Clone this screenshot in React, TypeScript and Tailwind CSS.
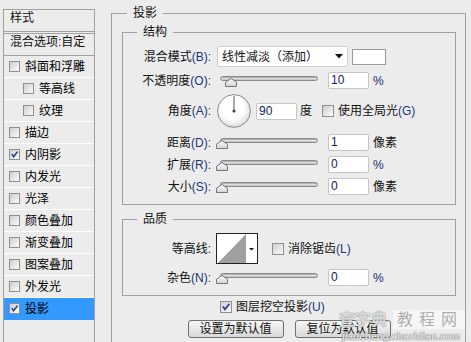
import React from 'react';

function Check({ checked = false, big = false }: { checked?: boolean; big?: boolean }) {
  return (
    <span
      className={`relative inline-block shrink-0 border border-[#8e8f8f] bg-linear-to-br from-[#cfcfcf] to-[#fbfbfb] ${
        big ? 'w-[12px] h-[12px]' : 'w-[11px] h-[11px]'
      }`}
    >
      {checked && (
        <svg className="absolute left-0 top-0" width="100%" height="100%" viewBox="0 0 10 10">
          <path d="M2 4.6 L4 7.4 L8.4 1.8" fill="none" stroke="#213a8f" strokeWidth="1.7" />
        </svg>
      )}
    </span>
  );
}

const L = ({ children }: { children: React.ReactNode }) => (
  <span className="text-[#1c3478]">{children}</span>
);

function Label({ children }: { children: React.ReactNode }) {
  return <div className="w-[88px] shrink-0 text-right leading-[16px]">{children}</div>;
}

function Slider({ pct }: { pct: number }) {
  return (
    <div className="relative w-[102px] h-[17px] shrink-0">
      <div className="absolute left-[4px] top-[4px] w-[98px] h-[5px] rounded-full border border-[#8a8a8a] bg-linear-to-b from-[#9c9c9c] via-[#dedede] to-[#bdbdbd]" />
      <svg className="absolute top-[6px]" style={{ left: pct * 92 }} width="12" height="9" viewBox="0 0 12 9">
        <defs>
          <linearGradient id="thumbg" x1="0" y1="0" x2="0" y2="1">
            <stop offset="0" stopColor="#ffffff" />
            <stop offset="1" stopColor="#d2d2d2" />
          </linearGradient>
        </defs>
        <polygon points="6,0.5 11.5,4.2 11.5,8.5 0.5,8.5 0.5,4.2" fill="url(#thumbg)" stroke="#777" strokeWidth="1" />
      </svg>
    </div>
  );
}

function Input({ value, w = 'w-[41px]' }: { value: string; w?: string }) {
  return (
    <div
      className={`${w} h-[17px] shrink-0 border border-[#c6c6c6] rounded-[2px] bg-white pl-[2px] text-[12px] leading-[15px] text-[#141a5c]`}
    >
      {value}
    </div>
  );
}

function SliderRow({
  label,
  pct,
  value,
  unit,
  mt,
}: {
  label: React.ReactNode;
  pct: number;
  value: string;
  unit: string;
  mt: string;
}) {
  return (
    <div className={`flex items-center h-[17px] ${mt}`}>
      <Label>{label}</Label>
      <div className="ml-[5px] flex items-center">
        <Slider pct={pct} />
        <div className="ml-[10px]">
          <Input value={value} />
        </div>
        <span className={`ml-[4px] leading-[16px] ${unit === '%' ? 'text-[#1c2a6a]' : ''}`}>{unit}</span>
      </div>
    </div>
  );
}

const rows: { t: string; sub?: boolean; checked?: boolean; active?: boolean }[] = [
  { t: '斜面和浮雕' },
  { t: '等高线', sub: true },
  { t: '纹理', sub: true },
  { t: '描边' },
  { t: '内阴影', checked: true },
  { t: '内发光' },
  { t: '光泽' },
  { t: '颜色叠加' },
  { t: '渐变叠加' },
  { t: '图案叠加' },
  { t: '外发光' },
  { t: '投影', checked: true, active: true },
];

function Button({ children }: { children: React.ReactNode }) {
  return (
    <div className="w-[96px] h-[18px] border border-[#707070] rounded-[3px] bg-linear-to-b from-[#f6f6f6] to-[#d9d9d9] flex items-center justify-center leading-[16px] text-[#111]">
      {children}
    </div>
  );
}

export default function App() {
  return (
    <div className="relative w-[471px] h-[342px] overflow-hidden bg-[#ececec] text-[12px] text-[#111] font-['Liberation_Sans','Noto_Sans_CJK_SC',sans-serif]">
      <div className="flex items-start">
        {/* Left style list */}
        <div className="mt-[9px] ml-[3px] w-[92px] h-[345px] shrink-0 border border-[#a0a0a0]">
          <div className="h-[22px] border-b border-[#a0a0a0] pl-[6px] leading-[16px]">样式</div>
          <div className="mt-[1px] h-[23px] border-t border-b border-[#a0a0a0] pl-[6px] leading-[16px]">
            混合选项:自定
          </div>
          {rows.map((r) => (
            <div
              key={r.t}
              className={`h-[22px] flex items-center border-b ${
                r.active ? 'bg-[#3399ff] border-[#3399ff]' : 'border-white'
              } ${r.sub ? 'pl-[19px]' : 'pl-[5px]'}`}
            >
              <Check checked={r.checked} />
              <span className="ml-[5px] leading-[16px] text-black">{r.t}</span>
            </div>
          ))}
        </div>

        {/* Right panel */}
        <fieldset className="ml-[16px] mt-[5px] w-[355px] shrink-0 border border-[#a0a0a0] pl-[10px] pr-[9px] pt-[3px] pb-[10px]">
          <legend className="ml-[5px] px-[6px] leading-[16px]">投影</legend>

          <fieldset className="border border-[#a0a0a0] pt-[6px] pb-[9px]">
            <legend className="ml-[14px] px-[6px] leading-[16px]">结构</legend>

            <div className="flex items-center h-[21px]">
              <Label>
                混合模式<L>(B):</L>
              </Label>
              <div className="ml-[6px] w-[131px] h-[21px] border border-[#d0d0d0] rounded-[2px] bg-white flex items-center pl-[4px] pr-[4px]">
                <span className="leading-[16px] flex-1">线性减淡（添加）</span>
                <svg width="8" height="5" viewBox="0 0 8 5">
                  <polygon points="0,0 8,0 4,4.5" fill="#111" />
                </svg>
              </div>
              <div className="ml-[4px] w-[34px] h-[16px] border border-[#9a9a9a] bg-white" />
            </div>

            <SliderRow
              mt="mt-[5px]"
              label={
                <>
                  不透明度<L>(O):</L>
                </>
              }
              pct={0.1}
              value="10"
              unit="%"
            />

            <div className="flex items-center h-[34px] mt-[5px]">
              <Label>
                角度<L>(A):</L>
              </Label>
              <svg className="ml-[6px] shrink-0" width="34" height="34" viewBox="0 0 34 34">
                <defs>
                  <radialGradient id="dialg" cx="0.45" cy="0.4" r="0.6">
                    <stop offset="0.6" stopColor="#ffffff" />
                    <stop offset="1" stopColor="#dcdcdc" />
                  </radialGradient>
                </defs>
                <circle cx="17" cy="17" r="16.4" fill="url(#dialg)" stroke="#8a8a8a" strokeWidth="1" />
                <line x1="17" y1="17" x2="17" y2="2" stroke="#555" strokeWidth="1" />
                <circle cx="17" cy="17" r="1.6" fill="#444" />
              </svg>
              <div className="ml-[5px]">
                <Input value="90" />
              </div>
              <span className="ml-[3px] leading-[16px]">度</span>
              <span className="ml-[10px] flex items-center">
                <Check big />
              </span>
              <span className="ml-[4px] leading-[16px]">
                使用全局光<L>(G)</L>
              </span>
            </div>

            <SliderRow
              mt="mt-[6px]"
              label={
                <>
                  距离<L>(D):</L>
                </>
              }
              pct={0}
              value="1"
              unit="像素"
            />
            <SliderRow
              mt="mt-[5px]"
              label={
                <>
                  扩展<L>(R):</L>
                </>
              }
              pct={0}
              value="0"
              unit="%"
            />
            <SliderRow
              mt="mt-[5px]"
              label={
                <>
                  大小<L>(S):</L>
                </>
              }
              pct={0}
              value="0"
              unit="像素"
            />
          </fieldset>

          <fieldset className="mt-[6px] border border-[#a0a0a0] pt-[6px] pb-[9px]">
            <legend className="ml-[14px] px-[6px] leading-[16px]">品质</legend>

            <div className="flex items-center h-[31px]">
              <Label>等高线:</Label>
              <div className="ml-[5px] w-[42px] h-[31px] shrink-0 border border-[#222] bg-white">
                <svg width="40" height="29" viewBox="0 0 40 29">
                  <polygon points="1,29 29,0 29,29" fill="#a0a0a0" />
                  <polygon points="32,14 37,14 34.5,16.5" fill="#111" />
                </svg>
              </div>
              <span className="ml-[14px] flex items-center">
                <Check big />
              </span>
              <span className="ml-[4px] leading-[16px]">
                消除锯齿<L>(L)</L>
              </span>
            </div>

            <SliderRow
              mt="mt-[5px]"
              label={
                <>
                  杂色<L>(N):</L>
                </>
              }
              pct={0}
              value="0"
              unit="%"
            />
          </fieldset>

          <div className="flex items-center h-[16px] mt-[3px] pl-[98px]">
            <Check big checked />
            <span className="ml-[4px] leading-[16px]">
              图层挖空投影<L>(U)</L>
            </span>
          </div>

          <div className="flex justify-center gap-[11px] mt-[5px]">
            <Button>设置为默认值</Button>
            <Button>复位为默认值</Button>
          </div>
        </fieldset>
      </div>

      {/* watermark overlay */}
      <div className="absolute left-[339px] top-[309px] flex items-center pointer-events-none">
        <span className="text-[16px] leading-[21px] font-bold text-[rgba(255,255,255,0.7)] [text-shadow:0_0_1px_#8a8a8a,0_0_1px_#8a8a8a]">
          查字典
        </span>
        <span className="ml-[6px] pl-[4px] pr-[2px] bg-[rgba(255,255,255,0.55)] text-[16px] leading-[19px] tracking-[6px] text-[rgba(160,160,160,0.85)]">
          教程网
        </span>
      </div>
      <div className="absolute left-[342px] top-[331px] text-[10px] leading-[12px] font-bold text-[rgba(255,255,255,0.8)] [text-shadow:0_0_1px_#777,0_0_1px_#777] pointer-events-none">
        jiaocheng.chazidian.com
      </div>
    </div>
  );
}
